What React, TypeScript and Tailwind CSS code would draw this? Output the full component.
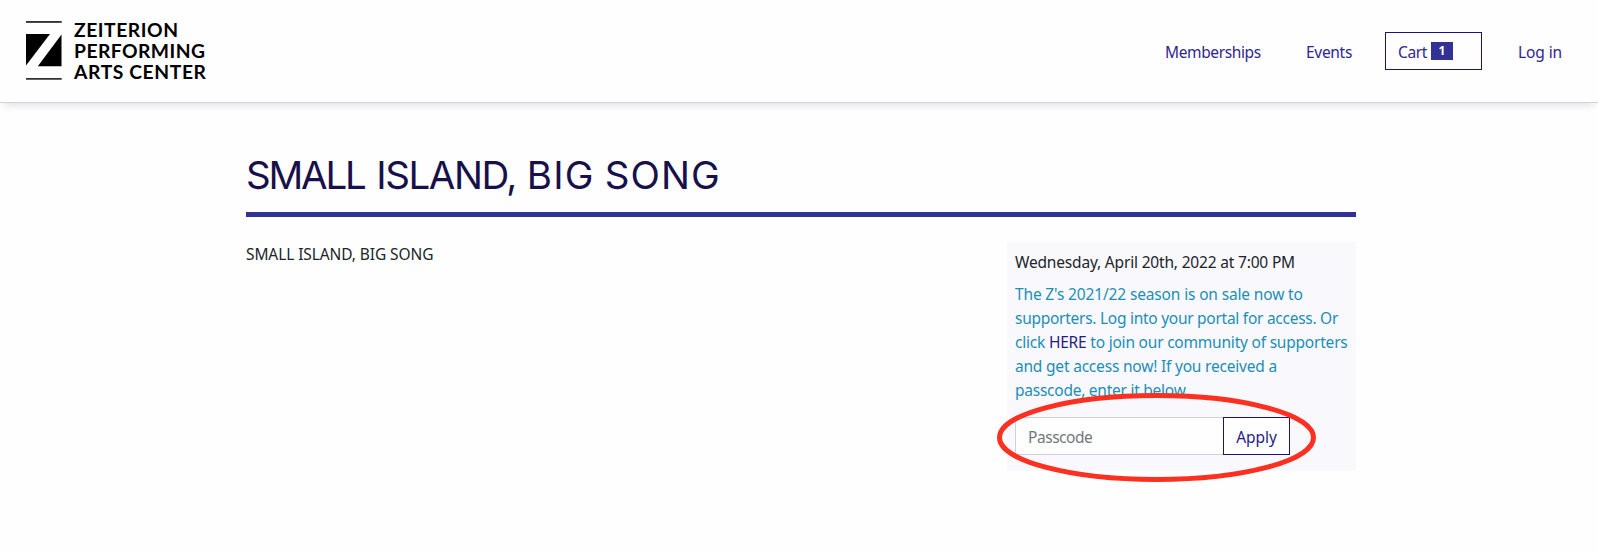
const body = "font-['Noto_Sans','Open_Sans',sans-serif]";

function Logo() {
  return (
    <svg className="block shrink-0" width="184" height="64" viewBox="24 19 184 64" aria-label="Zeiterion Performing Arts Center">
      <g fill="#000">
        <rect x="26" y="21.2" width="35.7" height="1.5" />
        <rect x="26" y="78.2" width="35.7" height="1.4" />
        <path d="M26 34H50L26 65.5Z" />
        <path d="M61.5 34.5V66.3H37.8Z" />
      </g>
      <g fill="#000" fontFamily="Lato, sans-serif" fontWeight="700" fontSize="19.3">
        <text x="74" y="36.5" textLength="104">ZEITERION</text>
        <text x="74" y="57.5" textLength="131">PERFORMING</text>
        <text x="74" y="78.5" textLength="132">ARTS CENTER</text>
      </g>
    </svg>
  );
}

function Header() {
  return (
    <header className="flex h-[103px] items-center justify-between border-b border-[#d5d3da] bg-[#fefefe] pl-6 pr-[36px] shadow-[0_6px_8px_-4px_rgba(20,0,40,0.13)]">
      <Logo />
      <nav className="flex items-center text-[15.5px] leading-6 text-[#30268f]">
        <a className="w-[141px] pt-px tracking-[-0.38px]">Memberships</a>
        <a className="w-[79px] pt-px tracking-[-0.3px]">Events</a>
        <a className="flex h-[38px] w-[97px] items-center border border-[#1b1180] pl-3">
          <span className="w-[33px] pt-px tracking-[-0.4px]">Cart</span>
          <span className="flex h-[18px] w-[22px] items-center justify-center bg-[#323194] text-[12px] font-bold leading-none text-white">1</span>
        </a>
        <a className="ml-[36px] w-[44px] whitespace-nowrap pt-px tracking-[-0.1px]">Log in</a>
      </nav>
    </header>
  );
}

function Offer() {
  return (
    <aside className="relative h-[229px] w-[349px] bg-[#f9f8fd] px-2 pt-2 text-[15.5px] leading-6">
      <p className="whitespace-nowrap tracking-[-0.18px] text-[#212529]">Wednesday, April 20th, 2022 at 7:00 PM</p>
      <div className="mt-2 whitespace-nowrap text-[#1c8fb5]">
        <p className="tracking-[-0.15px]">The Z's 2021/22 season is on sale now to</p>
        <p className="tracking-[-0.27px]">supporters. Log into your portal for access. Or</p>
        <p className="tracking-[-0.21px]">click <a className="text-[#281c84]">HERE</a> to join our community of supporters</p>
        <p className="tracking-[-0.2px]">and get access now! If you received a</p>
        <p className="tracking-[-0.25px]">passcode, enter it below.</p>
      </div>
      <form className="mt-[15px] flex h-[38px] w-[275px]">
        <input
          className="h-full w-[208px] border border-r-0 border-[#ced0de] bg-[#fefefe] px-3 pt-px tracking-[-0.45px] outline-none placeholder:text-[#73777c]"
          placeholder="Passcode"
        />
        <button type="button" className="h-full w-[67px] border border-[#1b1180] bg-[#fefefe] pt-px tracking-[-0.1px] text-[#281c84]">Apply</button>
      </form>
      <svg className="pointer-events-none absolute left-[-12px] top-[149px]" width="324" height="94" viewBox="0 0 324 94">
        <ellipse cx="161.5" cy="46.5" rx="157" ry="42" fill="none" stroke="#fc3020" strokeWidth="5" />
      </svg>
    </aside>
  );
}

export default function App() {
  return (
    <div className={`h-[552px] overflow-hidden bg-[#fefefe] ${body}`}>
      <Header />
      <main className="ml-[246px] w-[1110px] pt-[47px]">
        <h1 className="h-[62px] whitespace-nowrap font-['Inter',sans-serif] text-[38.5px] leading-[50px] tracking-[-0.7px] text-[#18104a]">
          <span className="mr-[1.5px] tracking-[-2.2px]">SMALL</span>{" "}
          <span className="mr-[0.7px] tracking-[-1.4px]">ISLAND,</span>{" "}
          <span className="tracking-[1.2px]">BIG</span>{" "}
          <span className="tracking-[1px]">SONG</span>
        </h1>
        <div className="h-[5px] bg-[#323194]" />
        <div className="flex items-start justify-between pt-[25px]">
          <p className="whitespace-nowrap text-[15.5px] leading-6 tracking-[-0.1px] text-[#212529]">SMALL ISLAND, BIG SONG</p>
          <Offer />
        </div>
      </main>
    </div>
  );
}
